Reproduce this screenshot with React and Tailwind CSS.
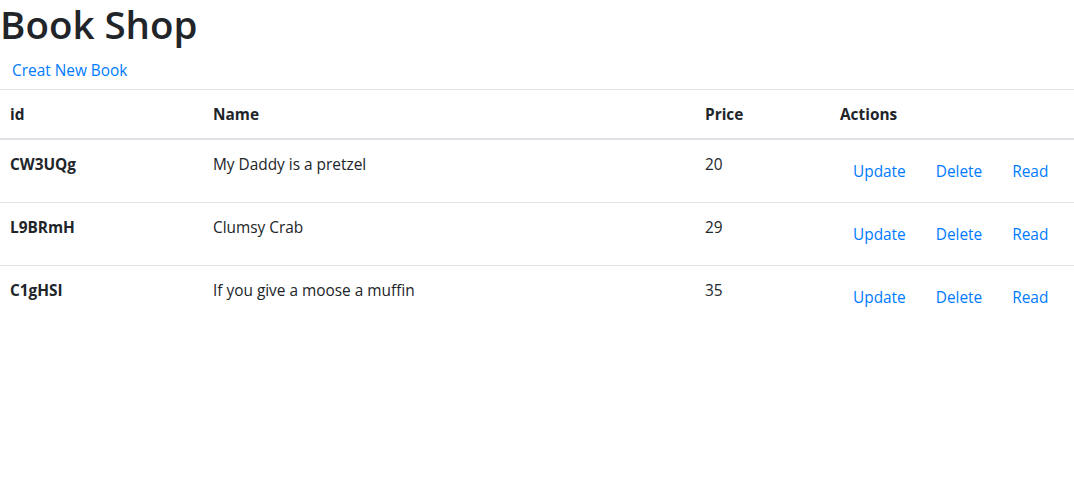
const books = [
  { id: 'CW3UQg', name: 'My Daddy is a pretzel', price: 20 },
  { id: 'L9BRmH', name: 'Clumsy Crab', price: 29 },
  { id: 'C1gHSI', name: 'If you give a moose a muffin', price: 35 },
];

export default function App() {
  return (
    <div className="min-h-[490px] bg-white text-[#212529] text-[15.4px] leading-6 font-['Open_Sans',sans-serif]">
      <h1 className="text-[38.5px] leading-[48px] font-semibold mb-1">Book Shop</h1>
      <a href="#" className="inline-block px-3 pt-[7px] pb-[5px] text-[#007bff]">
        Creat New Book
      </a>
      <table className="w-full border-collapse mt-px">
        <thead>
          <tr className="border-t border-[#dee2e6] border-b-2">
            <th className="w-[201px] px-3 pl-[10px] pt-[13px] pb-[11px] text-left font-bold align-bottom">id</th>
            <th className="w-[492px] px-3 pt-[13px] pb-[11px] text-left font-bold align-bottom">Name</th>
            <th className="w-[135px] px-3 pt-[13px] pb-[11px] text-left font-bold align-bottom">Price</th>
            <th className="px-3 pt-[13px] pb-[11px] text-left font-bold align-bottom">Actions</th>
          </tr>
        </thead>
        <tbody>
          {books.map((b, i) => (
            <tr key={b.id} className={i > 0 ? 'border-t border-[#dee2e6]' : ''}>
              <th className="p-3 pl-[10px] pt-[13px] text-left font-bold align-top">{b.id}</th>
              <td className="p-3 pt-[13px] align-top">{b.name}</td>
              <td className="p-3 pt-[13px] align-top">{b.price}</td>
              <td className="p-3 align-top">
                <div className="flex gap-1">
                  <button className="px-3 pt-[7px] pb-[5px] border border-transparent text-[#007bff]">Update</button>
                  <button className="px-3 pt-[7px] pb-[5px] border border-transparent text-[#007bff]">Delete</button>
                  <button className="px-3 pt-[7px] pb-[5px] border border-transparent text-[#007bff]">Read</button>
                </div>
              </td>
            </tr>
          ))}
        </tbody>
      </table>
    </div>
  );
}
